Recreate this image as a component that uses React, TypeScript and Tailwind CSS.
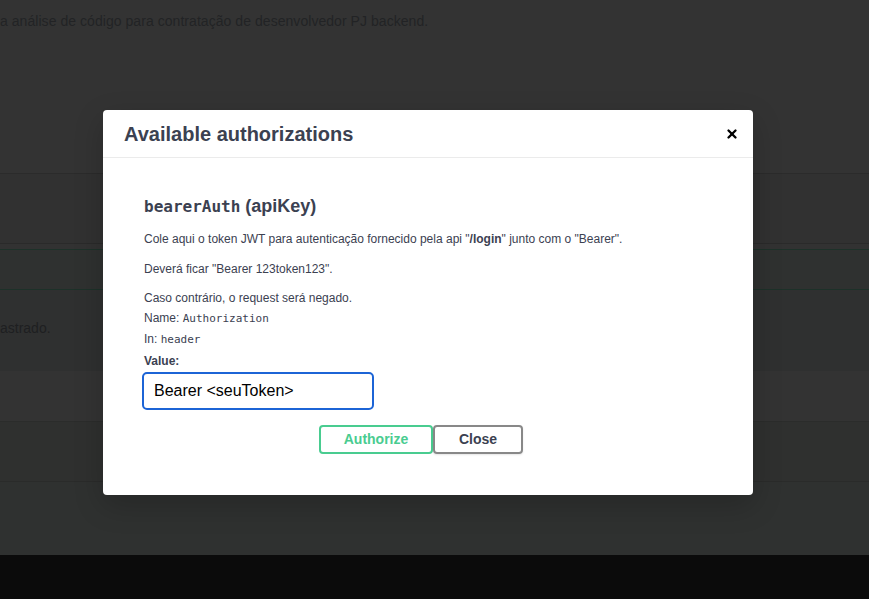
import { X } from 'lucide-react';

const sans = { fontFamily: '"Liberation Sans", Arial, sans-serif' };

export default function App() {
    return (
        <div className="relative w-[869px] h-[599px] overflow-hidden bg-[#333333] font-['Liberation_Sans',Arial,sans-serif]">
            {/* Darkened page behind the modal */}
            <div className="flex flex-col h-full">
                <div className="h-[173px] pt-[11px] text-[14px] tracking-[0.05px] text-[#222325] whitespace-nowrap">
                    a análise de código para contratação de desenvolvedor PJ backend.
                </div>
                <div className="h-[70px] border-t border-[#2b2b2b] bg-[#313131]" />
                <div className="h-[6px] border-t border-[#2a2a2a] bg-[#323232]" />
                <div className="h-[41px] border-t border-[#1d3129] border-b bg-[#2f3130]" />
                <div className="h-[81px] bg-[#2f3030] pt-[28px] text-[14px] text-[#1e1f21] whitespace-nowrap">astrado.</div>
                <div className="h-[50px] bg-[#333333]" />
                <div className="h-[60px] border-t border-[#2b2c2b] bg-[#2f302f]" />
                <div className="h-[74px] border-t border-[#2a2b2a] bg-[#2f3130]" />
                <div className="flex-1 bg-[#0b0b0b]" />
            </div>

            {/* Modal */}
            <div className="absolute left-[103px] top-[110px] w-[650px] h-[385px] bg-white rounded-[4px] shadow-[0_10px_30px_rgba(0,0,0,0.2)] text-[#3b4151]" style={sans}>
                <div className="flex items-center justify-between h-[48px] pl-[21px] pr-[14px] border-b border-[#ebebeb]">
                    <h3 className="text-[20px] font-bold text-[#3b4151] pt-[1px]">Available authorizations</h3>
                    <X className="w-[14px] h-[14px] text-black" strokeWidth={4} />
                </div>
                <div className="pl-[41px] pr-[20px] pt-[37px]">
                    <h4 className="text-[18px] font-bold leading-[22px] text-[#3b4151]">
                        <code className="font-['DejaVu_Sans_Mono',monospace] text-[16px]">bearerAuth</code>
                        <span> (apiKey)</span>
                    </h4>
                    <p className="text-[12px] mt-[14px] leading-[14px]">
                        Cole aqui o token JWT para autenticação fornecido pela api "<b>/login</b>" junto com o "Bearer".
                    </p>
                    <p className="text-[12px] mt-[16px] leading-[14px]">Deverá ficar "Bearer 123token123".</p>
                    <p className="text-[12px] mt-[15px] leading-[14px]">Caso contrário, o request será negado.</p>
                    <p className="text-[12px] mt-[6px] leading-[14px]">
                        Name: <code className="font-['DejaVu_Sans_Mono',monospace] text-[11px]">Authorization</code>
                    </p>
                    <p className="text-[12px] mt-[6px] leading-[14px]">
                        In: <code className="font-['DejaVu_Sans_Mono',monospace] text-[11px]">header</code>
                    </p>
                    <label className="block text-[12px] font-bold mt-[7px] leading-[14px]">Value:</label>
                    <div className="mt-[4px] -ml-[2px] w-[232px] h-[38px] border-2 border-[#1c64d6] rounded-[5px] flex items-center pl-[10px] text-[16px] text-black">
                        Bearer &lt;seuToken&gt;
                    </div>
                    <div className="flex mt-[15px] pl-[175px]">
                        <button className="w-[114px] h-[29px] border-2 border-[#49cc90] rounded-[4px] text-[14px] font-bold text-[#49cc90]">Authorize</button>
                        <button className="w-[90px] h-[29px] border-2 border-[#888888] rounded-[4px] text-[14px] font-bold text-[#3b4151] shadow-[0_1px_2px_rgba(0,0,0,0.1)]">Close</button>
                    </div>
                </div>
            </div>
        </div>
    );
}
